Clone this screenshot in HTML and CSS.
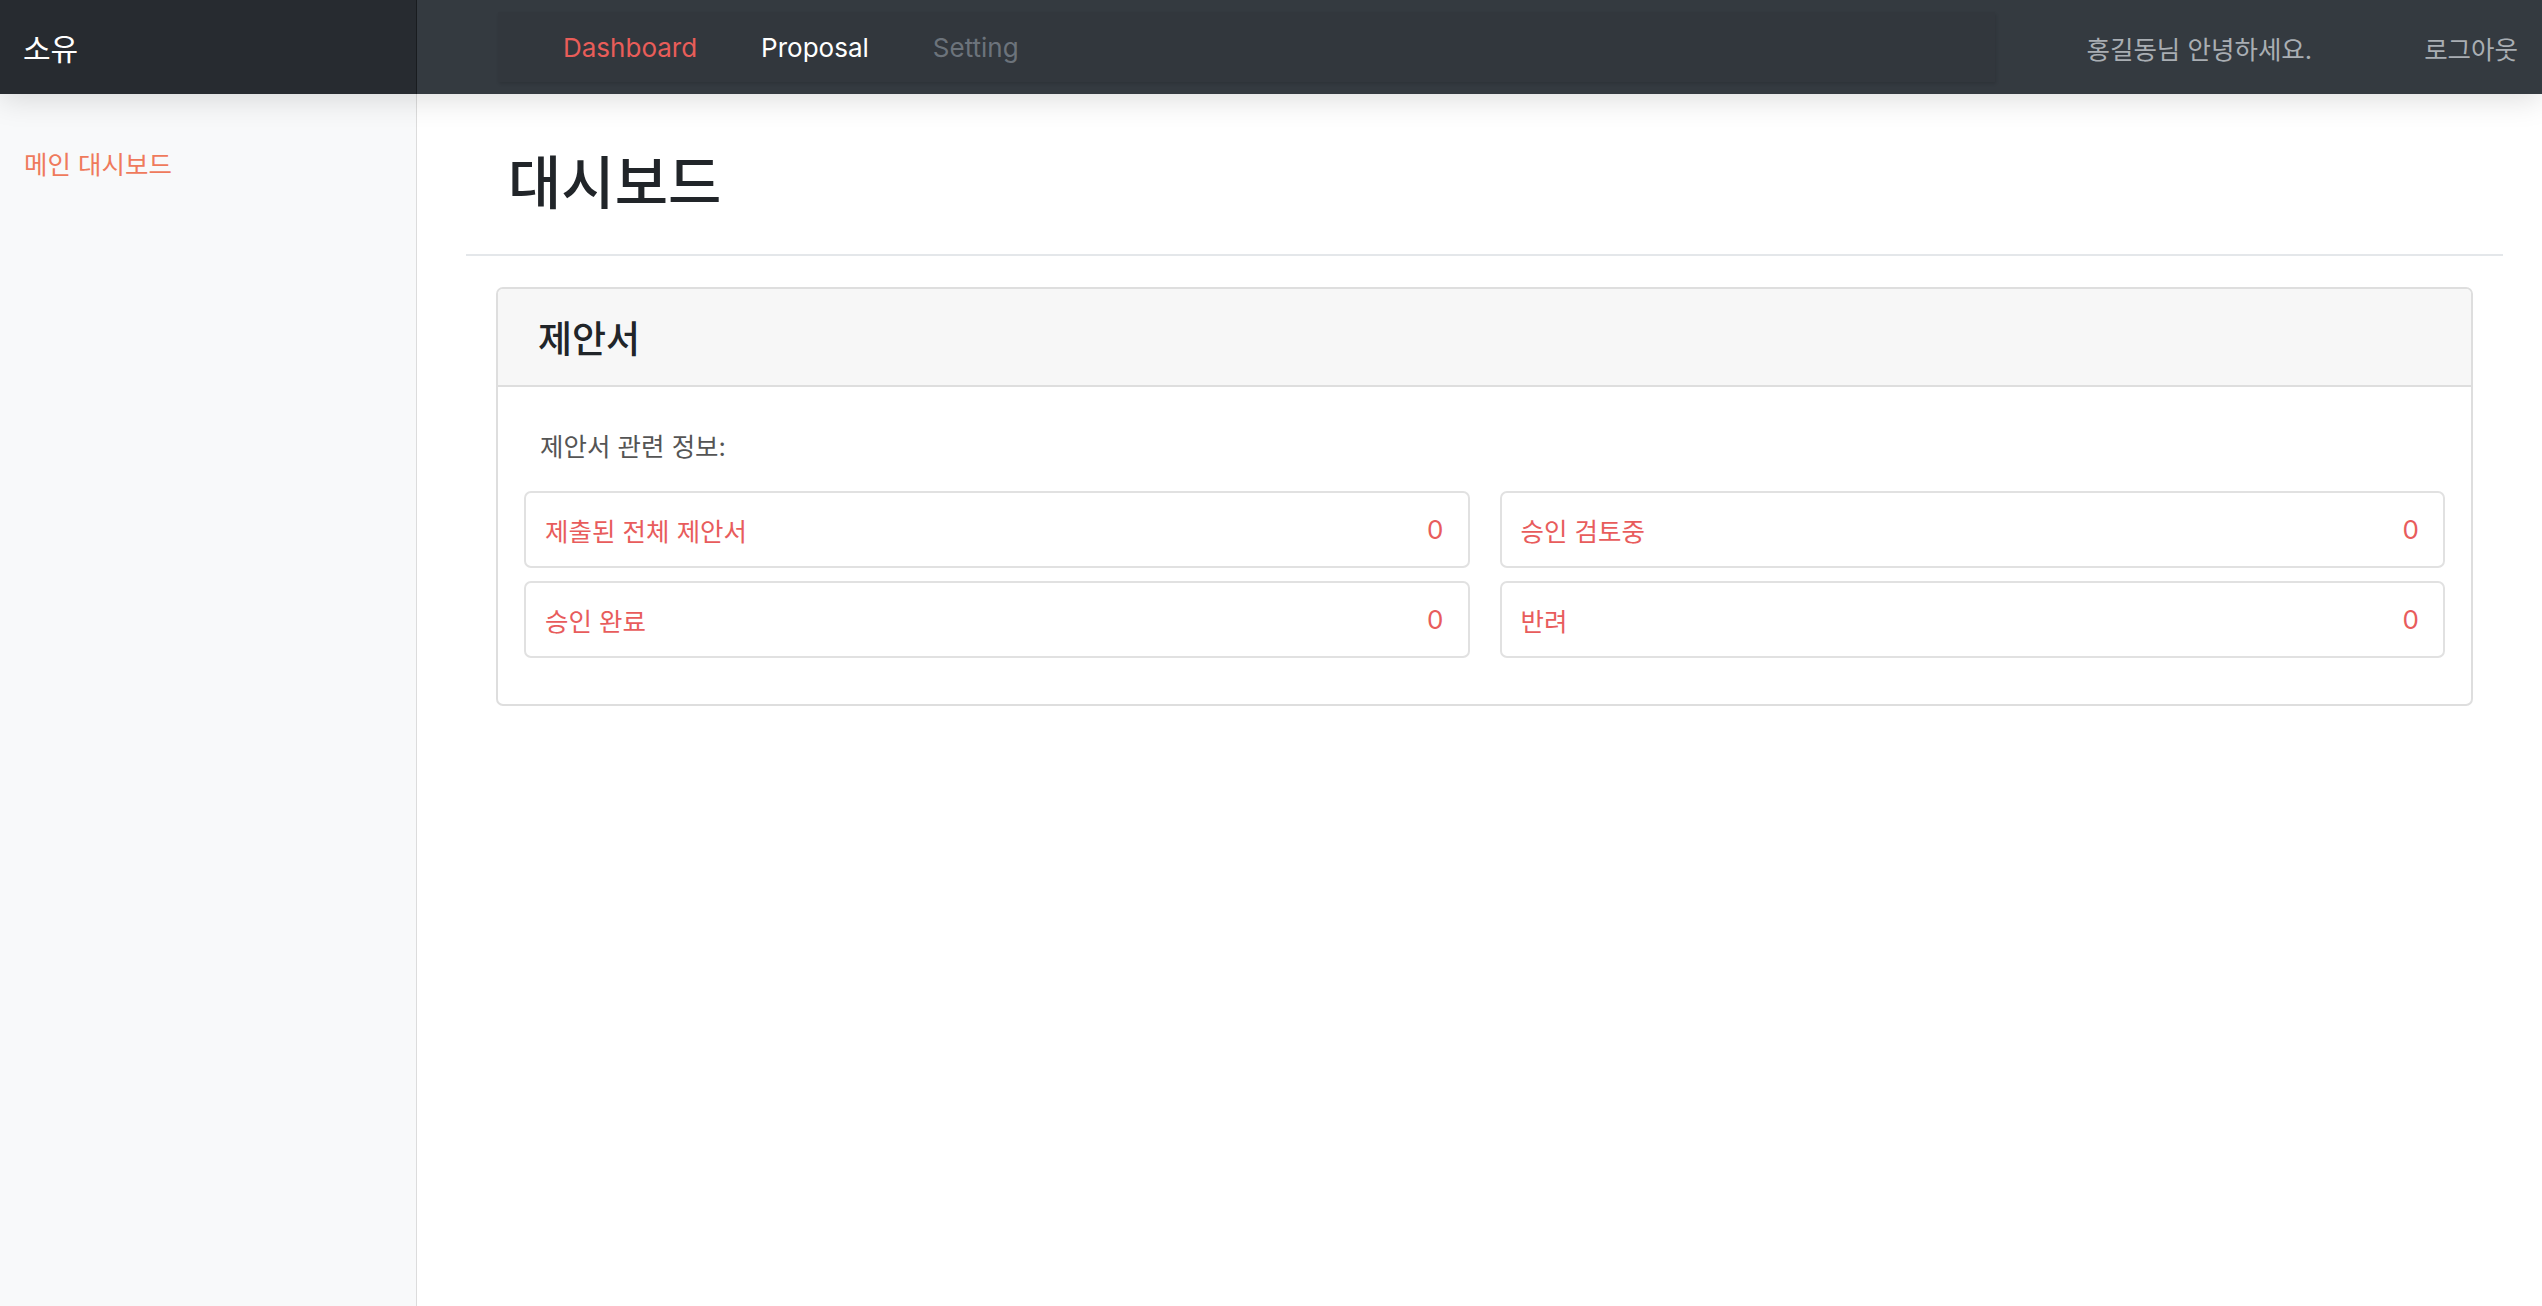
FILE: index.html
```html
<!DOCTYPE html>
<html lang="ko">
<head>
<meta charset="utf-8">
<title>대시보드</title>
<link rel="stylesheet" href="styles.css">
</head>
<body>
<header class="topbar">
  <div class="brand">소유</div>
  <div class="topbar-main">
    <nav class="topnav">
      <a class="topnav-link active" href="#">Dashboard</a>
      <a class="topnav-link" href="#">Proposal</a>
      <a class="topnav-link muted" href="#">Setting</a>
    </nav>
    <div class="user-area">
      <span class="greeting">홍길동님 안녕하세요.</span>
      <a class="logout" href="#">로그아웃</a>
    </div>
  </div>
</header>
<div class="layout">
  <aside class="sidebar">
    <a class="side-link" href="#">메인 대시보드</a>
  </aside>
  <main class="content">
    <div class="page-head">
      <h1 class="page-title">대시보드</h1>
    </div>
    <section class="card">
      <div class="card-header">
        <h2 class="card-title">제안서</h2>
      </div>
      <div class="card-body">
        <p class="card-text">제안서 관련 정보:</p>
        <div class="stat-grid">
          <div class="stat"><span>제출된 전체 제안서</span><span class="num">0</span></div>
          <div class="stat"><span>승인 검토중</span><span class="num">0</span></div>
          <div class="stat"><span>승인 완료</span><span class="num">0</span></div>
          <div class="stat"><span>반려</span><span class="num">0</span></div>
        </div>
      </div>
    </section>
  </main>
</div>
</body>
</html>
```
FILE: styles.css
```css
* { box-sizing: border-box; }
html, body { margin: 0; padding: 0; height: 100%; }
body {
  font-family: "Inter", "Noto Sans CJK KR", sans-serif;
  font-size: 25px;
  color: #212529;
  background: #fff;
  display: flex;
  flex-direction: column;
  min-height: 1306px;
}
a { text-decoration: none; }

.topbar {
  height: 94px;
  display: flex;
  background: #343a40;
  position: relative;
  z-index: 2;
  box-shadow: 0 6px 28px rgba(0,0,0,0.13);
  flex: none;
}
.brand {
  width: 417px;
  flex: none;
  background: #272b30;
  box-shadow: inset -1px 0 0 rgba(0,0,0,0.35);
  color: #fff;
  font-size: 30px;
  display: flex;
  align-items: center;
  padding-left: 23px;
}
.topbar-main {
  flex: 1;
  display: flex;
  align-items: center;
  justify-content: space-between;
  padding-left: 81px;
  padding-right: 24px;
}
.topnav {
  width: 1497px;
  height: 70px;
  display: flex;
  align-items: center;
  padding-left: 33px;
  background: #32373d;
  box-shadow: 1px 2px 3px rgba(0,0,0,0.12);
}
.topnav-link {
  font-size: 26px;
  padding: 0 32px;
  color: #fff;
}
.topnav-link.active { color: #e95d59; }
.topnav-link.muted { color: #6c737b; }
.user-area {
  display: flex;
  align-items: center;
  gap: 112px;
  color: #a9aeb3;
}
.greeting, .logout { font-size: 25.5px; color: #a9aeb3; }

.layout {
  flex: 1;
  display: flex;
}
.sidebar {
  width: 417px;
  flex: none;
  background: #f8f9fa;
  border-right: 1px solid #dcdcdc;
  padding: 50px 0 0 24px;
}
.side-link {
  color: #ef7a5c;
  font-size: 25.5px;
}

.content {
  flex: 1;
  padding: 0 39px 0 49px;
}
.page-head {
  padding: 55px 0 35px 42px;
  border-bottom: 2px solid #e4e7ea;
}
.page-title {
  margin: 0;
  font-size: 58px;
  font-weight: 500;
  line-height: 1.2;
  color: #212529;
}
.card {
  margin: 31px 30px 0 30px;
  border: 2px solid #dedede;
  border-radius: 7px;
  overflow: hidden;
}
.card-header {
  background: #f7f7f7;
  border-bottom: 2px solid #dedede;
  height: 98px;
  display: flex;
  align-items: center;
  padding-left: 40px;
}
.card-title {
  margin: 0;
  font-size: 37px;
  font-weight: 500;
  color: #212529;
}
.card-body {
  padding: 40px 26px 46px 42px;
}
.card-text {
  margin: 0 0 25px 0;
  line-height: 39px;
  color: #555;
  font-size: 25.5px;
}
.stat-grid {
  margin-left: -16px;
  display: grid;
  grid-template-columns: 1fr 1fr;
  column-gap: 30px;
  row-gap: 13px;
}
.stat {
  height: 77px;
  border: 2px solid #e1e1e1;
  border-radius: 7px;
  display: flex;
  align-items: center;
  justify-content: space-between;
  padding: 0 24px 0 19px;
  color: #e85c5c;
  font-size: 25.5px;
}
.stat .num { font-size: 26px; }
```
